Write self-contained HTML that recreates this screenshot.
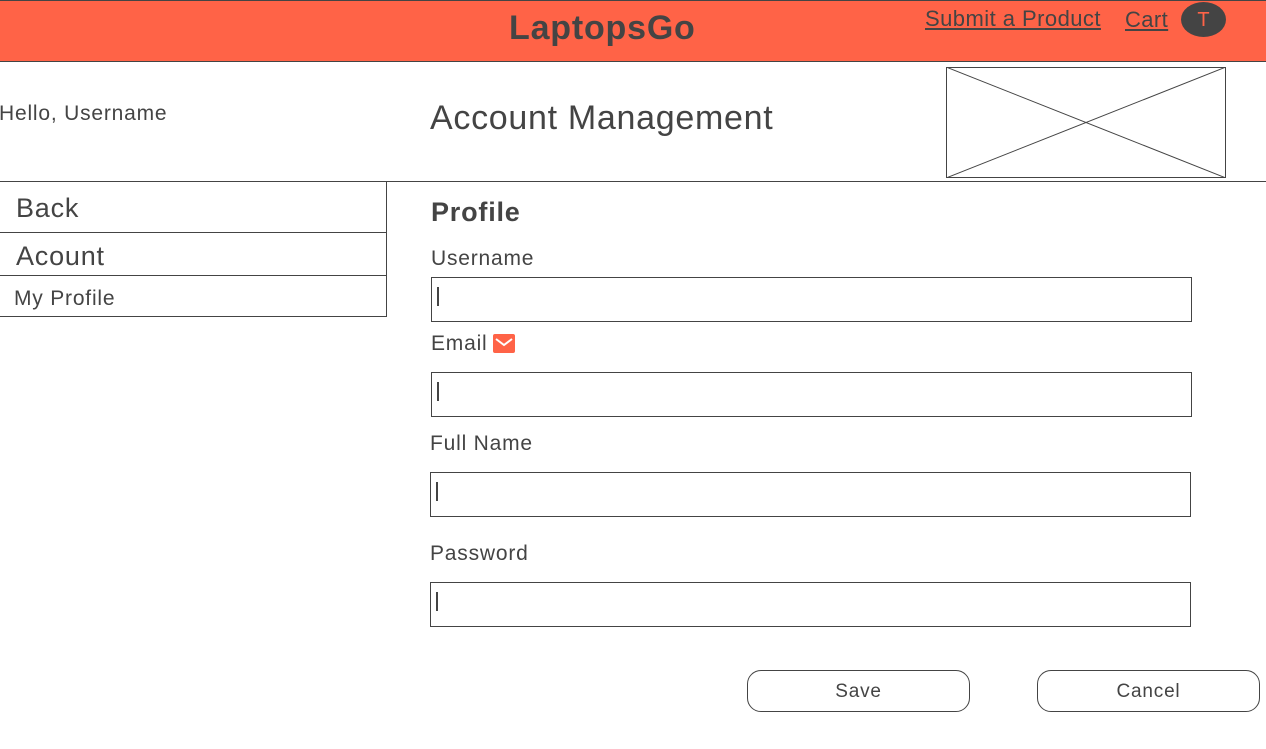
<!DOCTYPE html>
<html><head><style>
body{margin:0;width:1266px;height:749px;position:relative;background:#fff;font-family:"Liberation Sans",sans-serif;color:#444;overflow:hidden;letter-spacing:0.8px}
.a{position:absolute}
.inp{position:absolute;border:1px solid #444;box-sizing:border-box;height:45px}
.inp:after{content:"";position:absolute;left:5px;top:9px;width:2px;height:19px;background:#444}
.btn{position:absolute;border:1px solid #444;border-radius:14px;box-sizing:border-box;height:42px;width:223px;text-align:center;line-height:42px;font-size:19px}
</style></head><body>
<div class="a" style="left:0;top:0;width:1266px;height:62px;background:#ff6347;border-top:1px solid #444;border-bottom:1px solid #444;box-sizing:border-box"></div>
<div class="a" style="left:509px;top:9px;font-size:34px;font-weight:bold">LaptopsGo</div>
<div class="a" style="left:925px;top:6px;font-size:22px;text-decoration:underline;letter-spacing:0.45px">Submit a Product</div>
<div class="a" style="left:1125px;top:7px;font-size:22px;text-decoration:underline;letter-spacing:0.4px">Cart</div>
<div class="a" style="left:1181px;top:2px;width:45px;height:35px;border-radius:50%;background:#444;color:#ff6347;font-size:20px;text-align:center;line-height:37px;letter-spacing:0">T</div>
<div class="a" style="left:-1px;top:102px;font-size:21px">Hello, Username</div>
<div class="a" style="left:430px;top:99px;font-size:34px;letter-spacing:0.7px">Account Management</div>
<svg class="a" style="left:946px;top:67px" width="280" height="111"><rect x="0.5" y="0.5" width="279" height="110" fill="none" stroke="#444"/><line x1="0" y1="0" x2="280" y2="111" stroke="#444"/><line x1="280" y1="0" x2="0" y2="111" stroke="#444"/></svg>
<div class="a" style="left:0;top:181px;width:1266px;height:1px;background:#444"></div>
<div class="a" style="left:386px;top:181px;width:1px;height:136px;background:#444"></div>
<div class="a" style="left:0;top:232px;width:387px;height:1px;background:#444"></div>
<div class="a" style="left:0;top:275px;width:387px;height:1px;background:#444"></div>
<div class="a" style="left:0;top:316px;width:387px;height:1px;background:#444"></div>
<div class="a" style="left:16px;top:193px;font-size:27px">Back</div>
<div class="a" style="left:16px;top:241px;font-size:27px">Acount</div>
<div class="a" style="left:14px;top:287px;font-size:21px">My Profile</div>
<div class="a" style="left:431px;top:197px;font-size:27px;font-weight:bold">Profile</div>
<div class="a" style="left:431px;top:247px;font-size:21px">Username</div>
<div class="inp" style="left:431px;top:277px;width:761px"></div>
<div class="a" style="left:431px;top:332px;font-size:21px">Email</div>
<svg class="a" style="left:493px;top:334px" width="22" height="19"><rect width="22" height="19" rx="2" fill="#ff6347"/><path d="M3 5 L11 11 L19 5" fill="none" stroke="#fff" stroke-width="2"/></svg>
<div class="inp" style="left:431px;top:372px;width:761px"></div>
<div class="a" style="left:430px;top:432px;font-size:21px">Full Name</div>
<div class="inp" style="left:430px;top:472px;width:761px"></div>
<div class="a" style="left:430px;top:542px;font-size:21px">Password</div>
<div class="inp" style="left:430px;top:582px;width:761px"></div>
<div class="btn" style="left:747px;top:670px">Save</div>
<div class="btn" style="left:1037px;top:670px">Cancel</div>
</body></html>
